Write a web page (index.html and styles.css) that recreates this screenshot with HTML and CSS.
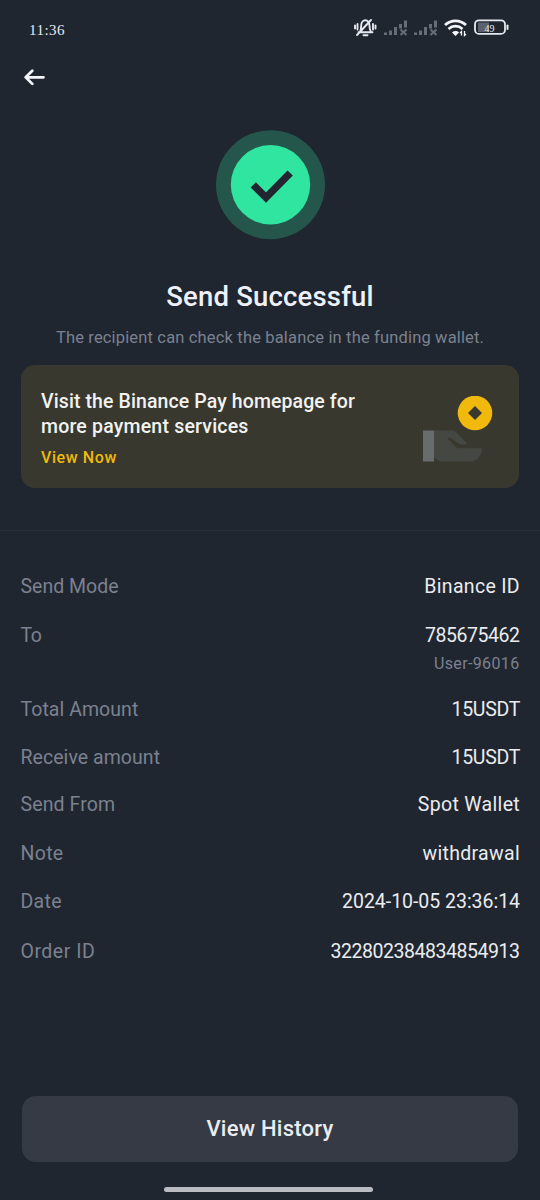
FILE: index.html
```
<!DOCTYPE html>
<html lang="en">
<head>
<meta charset="utf-8">
<title>Send Successful</title>
<link rel="stylesheet" href="styles.css">
</head>
<body>
<main class="screen">
  <header class="status">
    <span class="clock">11:36</span>
    <svg class="status-icons" width="160" height="24" viewBox="0 0 160 24" fill="none">
      <g stroke="#e6e9f0" stroke-width="1.9" stroke-linecap="round" stroke-linejoin="round">
        <path d="M8.500 17.300h14M10 17c1-2 1.200-4 1.200-6.500 0-7 8.300-7 8.300 0 0 2.500.200 4.500 1.500 6.500M13.500 20.300h4M7 20 21 5M7.500 9v5.500M5 10.500v3M23 9v5.500M25.500 10.500v3"/>
      </g>
      <g id="signal" fill="#676c77"><path d="M34 17.500h3V20h-3zM39 15.500h3V20h-3zM44 12h3v8h-3zM49 9h3v4.500h-3zM54 5.500h3v7h-3z"/><path d="m50.500 14.500 6 5.500m0-5.500-6 5.500" stroke="#676c77" stroke-width="2.200"/></g>
      <use href="#signal" x="30"/>
      <g stroke="#f4f6fa" stroke-width="2.700"><path d="M95 10c6-5.600 15-5.600 21 0M98.500 13.900c4-3.700 10-3.700 14 0"/><path d="M102 17.500c2.200-1.900 5-1.900 7 0l-3.500 3.500z" fill="#f4f6fa" stroke="none"/><path d="M111.500 20.500v-4l-1.500 1.500M114.500 16v4.500l1.500-1.500" stroke-width="1.300"/></g>
      <rect x="125" y="5.300" width="30" height="13.600" rx="4" stroke="#e6e9f0" stroke-width="1.800"/>
      <path d="M128 7.500h11v9.500h-11z" fill="#5c626d"/><path d="M157.500 10.500v3.500" stroke="#e6e9f0" stroke-width="2" stroke-linecap="round"/>
      <text x="134.500" y="16.800" class="battery">49</text>
    </svg>
  </header>
  <nav class="nav"><svg width="22" height="18" viewBox="0 0 22 18" fill="none" stroke="#f5f6fa" stroke-width="2.700" stroke-linecap="round" stroke-linejoin="round"><path d="M19.500 9.300H2M8.300 2.700 1.700 9.300l6.600 6.600"/></svg></nav>
  <section class="result">
    <svg class="badge" width="110" height="110" viewBox="0 0 110 110"><circle cx="55.500" cy="54.700" r="54.500" fill="#24564c"/><circle cx="55.500" cy="54.700" r="39.700" fill="#2fe5a0"/><path d="M38.300 54.800 51 67.500 75.200 43" fill="none" stroke="#212630" stroke-width="7.400"/></svg>
    <h1 class="title">Send Successful</h1>
    <p class="hint">The recipient can check the balance in the funding wallet.</p>
  </section>
  <section class="card">
    <div>
      <p class="card-text">Visit the Binance Pay homepage for<br><span class="second-line">more payment services</span></p>
      <a class="card-link">View Now</a>
    </div>
    <svg width="70" height="66" viewBox="0 0 70 66"><path d="M0 34.500h11v31H0z" fill="#696c6d"/><path d="M11 34.500h18c2 0 3 .5 4.500 2L43.500 47c.7 1 0 1.500-1.500 1.500h-4.500L26.500 41.500l-2 1L34 52.300h25c0 7-5 13.200-11 13.200H21c-5 0-8-2-10-4.500z" fill="#454842"/><circle cx="52" cy="17" r="17.300" fill="#f0b90b"/><path d="m52 10 7 7-7 7-7-7z" fill="#38382f"/></svg>
  </section>
  <hr class="rule">
  <dl class="details">
    <dt>Send Mode</dt><dd class="wide">Binance ID</dd>
    <dt class="tight">To</dt><dd class="digits">785675462<small>User-96016</small></dd>
    <dt class="total">Total Amount</dt><dd class="amount">15USDT</dd>
    <dt class="total">Receive amount</dt><dd class="amount">15USDT</dd>
    <dt class="from">Send From</dt><dd class="wide">Spot Wallet</dd>
    <dt class="wide">Note</dt><dd class="wide">withdrawal</dd>
    <dt class="wide">Date</dt><dd class="date">2024-10-05 23:36:14</dd>
    <dt class="order">Order ID</dt><dd class="digits">322802384834854913</dd>
  </dl>
  <footer class="footer"><button class="history">View History</button><div class="home"></div></footer>
</main>
</body>
</html>
```
FILE: styles.css
```
* { box-sizing: border-box; }
body { margin: 0; background: #202630; }
.screen { width: 540px; height: 1200px; display: flex; flex-direction: column; color: #eaecef; font-family: Roboto, "Noto Sans", sans-serif; }
.status { height: 56px; padding: 15px 28px 0 29px; display: flex; justify-content: space-between; }
.clock { font: 15px/30px "Liberation Serif", serif; letter-spacing: 0.5px; color: #e6e9f0; }
.status-icons { margin-right: 2px; }
.battery { font: 10px "Liberation Serif", serif; fill: #e6e9f0; }
.nav { height: 74px; padding: 12px 0 0 24px; }
.result { text-align: center; height: 235px; }
.badge { display: block; margin: 0 auto; }
.title { margin: 39px 0 0; font-size: 27.5px; font-weight: 500; line-height: 36px; letter-spacing: 0.18px; color: #eef1fa; }
.hint { margin: 13px 0 0; font-size: 16.5px; line-height: 20px; letter-spacing: 0.16px; color: #7b818f; }
.card { margin: 0 21px; height: 123px; flex: none; border-radius: 14px; background: #38382f; padding: 24px 26px 0 20px; display: flex; justify-content: space-between; }
.card svg { margin-top: 7px; }
.card-text { margin: 0; font-size: 19.5px; font-weight: 500; line-height: 25px; letter-spacing: 0.1px; color: #f2f2f0; }
.second-line { letter-spacing: 0.2px; }
.card-link { display: block; margin-top: 9px; font-size: 16px; font-weight: 500; line-height: 20px; letter-spacing: 0.6px; color: #f0b90b; }
.rule { width: 100%; margin: 42px 0 0; border: 0; height: 1px; background: #2a303a; }
.details { margin: 43px 20px 0 20.5px; display: grid; grid-template-columns: auto 1fr; grid-template-rows: 49px 74px 48px 47px 49px 48px 50px 30px; font-size: 19.5px; line-height: 26px; }
.details dt { color: #7b818f; }
.details dd { margin: 0; text-align: right; }
.details small { display: block; margin-top: 5px; font-size: 16px; line-height: 20px; letter-spacing: 0.36px; color: #7b818f; }
.details .wide { letter-spacing: 0.32px; }
.details .tight { letter-spacing: -0.4px; }
.details .total { letter-spacing: 0.05px; }
.details .from { letter-spacing: 0.12px; }
.details .order { letter-spacing: 0.5px; }
.details .amount { letter-spacing: -0.3px; }
.details .digits { letter-spacing: -0.46px; padding-right: 0.5px; }
.details .date { letter-spacing: -0.03px; }
.footer { margin-top: auto; padding: 0 22px 8px; }
.history { display: block; width: 100%; height: 66px; border: 0; border-radius: 14px; background: #353a45; color: #eaecef; font: 500 22px Roboto, sans-serif; letter-spacing: 0.25px; }
.home { width: 209px; height: 5px; margin: 25.5px 0 0 142px; border-radius: 3px; background: #b9bcc3; }
```
